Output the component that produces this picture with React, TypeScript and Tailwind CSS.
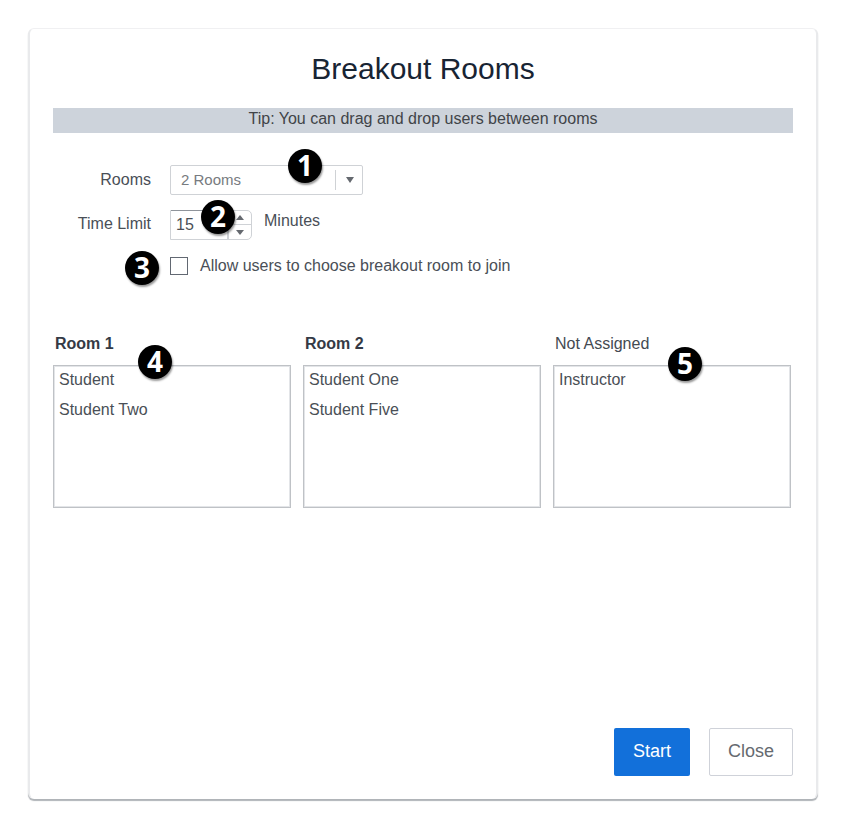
import React from "react";

function Badge({ n, place }: { n: number; place: string }) {
  return (
    <span
      className={`absolute z-10 flex h-[34px] w-[34px] items-center justify-center rounded-full bg-black font-['Open_Sans','Noto_Sans',sans-serif] text-[28px] leading-[32px] font-bold text-white shadow-[1px_2px_2px_rgba(0,0,0,0.4)] ${place}`}
    >
      <span className="-mt-[3px]">{n}</span>
    </span>
  );
}

function Room({
  title,
  bold,
  users,
  badge,
}: {
  title: string;
  bold?: boolean;
  users: string[];
  badge?: React.ReactNode;
}) {
  return (
    <section className="relative w-[238px]">
      <h2 className={`h-[31px] pl-0.5 text-base leading-[20px] ${bold ? "font-bold text-[#343a45]" : "text-[#444a52]"}`}>
        {title}
      </h2>
      <ul className="h-[143px] border border-[#bfc2c6] pt-px pl-[5px] text-[#4a4f56] shadow-[inset_0_0_0_1px_#e3e5e8]">
        {users.map((u) => (
          <li key={u} className="h-[30px] leading-[26px]">
            {u}
          </li>
        ))}
      </ul>
      {badge}
    </section>
  );
}

export default function App() {
  return (
    <div className="h-[829px] w-[847px] overflow-hidden bg-white pt-7 pl-7 font-['Liberation_Sans',Arial,sans-serif] text-base text-[#4a4f57]">
      <main className="flex h-[771px] w-[790px] flex-col rounded-[6px] border-x-2 border-t border-x-[#e9eaec] border-t-[#f0f0f2] bg-white px-[23px] shadow-[0_2px_1px_#b0b4b8]">
        <h1 className="mt-5 h-[59px] pt-px text-center text-[30px] leading-[38px] text-[#182433]">Breakout Rooms</h1>
        <p className="h-[25px] bg-[#cdd3db] text-center leading-[22px] text-[#414448]">
          Tip: You can drag and drop users between rooms
        </p>

        <form className="mt-8 h-[169px]">
          <div className="flex h-[30px]">
            <label className="w-[98px] text-right leading-[30px]">Rooms</label>
            <div className="relative ml-[19px] flex h-[30px] w-[193px] items-center rounded-[2px] border border-[#cfd2d6] pl-[10px] text-[15px] text-[#777b80]">
              <span className="flex-1 pt-px">2 Rooms</span>
              <span className="mr-2.5 h-5 w-px bg-[#cfd2d5]" />
              <svg className="mr-[8px] h-1.5 w-2" viewBox="0 0 8 6">
                <path d="M0 0h8L4 6z" fill="#65696f" />
              </svg>
              <Badge n={1} place="left-[117px] -top-[17px]" />
            </div>
          </div>
          <div className="mt-[15px] flex h-[30px]">
            <label className="w-[98px] text-right leading-[27px]">Time Limit</label>
            <div className="relative ml-[19px] flex h-[30px] w-[82px] rounded-r-[5px] border border-[#cfd2d6]">
              <span className="-mt-px w-[56px] border-t border-[#8f949b] pl-[5px] leading-[27px]">15</span>
              <span className="w-0.5 bg-[#cfd2d6]" />
              <span className="flex flex-1 flex-col">
                <span className="flex h-[14px] items-center justify-center border-b border-[#cfd2d6]">
                  <svg className="h-[5px] w-2" viewBox="0 0 8 5">
                    <path d="M0 5h8L4 0z" fill="#65696f" />
                  </svg>
                </span>
                <span className="flex flex-1 items-center justify-center">
                  <svg className="h-[5px] w-2" viewBox="0 0 8 5">
                    <path d="M0 0h8L4 5z" fill="#65696f" />
                  </svg>
                </span>
              </span>
              <Badge n={2} place="left-[30px] -top-[11px]" />
            </div>
            <span className="ml-3 leading-[21px]">Minutes</span>
          </div>
          <div className="relative mt-[15px] flex h-[24px] pl-[117px]">
            <span className="mt-[2px] h-[18px] w-[18px] border border-[#626872]" />
            <span className="ml-3 leading-[21px]">Allow users to choose breakout room to join</span>
            <Badge n={3} place="left-[72px] -top-[4px]" />
          </div>
        </form>

        <div className="flex gap-3">
          <Room
            title="Room 1"
            bold
            users={["Student", "Student Two"]}
            badge={<Badge n={4} place="left-[85px] top-[11px]" />}
          />
          <Room title="Room 2" bold users={["Student One", "Student Five"]} />
          <Room
            title="Not Assigned"
            users={["Instructor"]}
            badge={<Badge n={5} place="left-[115px] top-[13px]" />}
          />
        </div>

        <footer className="mt-auto mb-[23px] flex justify-end gap-[19px] text-lg">
          <button className="h-12 w-[76px] rounded-[2px] bg-[#1270da] pb-0.5 text-white">Start</button>
          <button className="h-12 w-[84px] rounded-[2px] border border-[#cfd2d9] pb-0.5 text-[#666a70]">Close</button>
        </footer>
      </main>
    </div>
  );
}
